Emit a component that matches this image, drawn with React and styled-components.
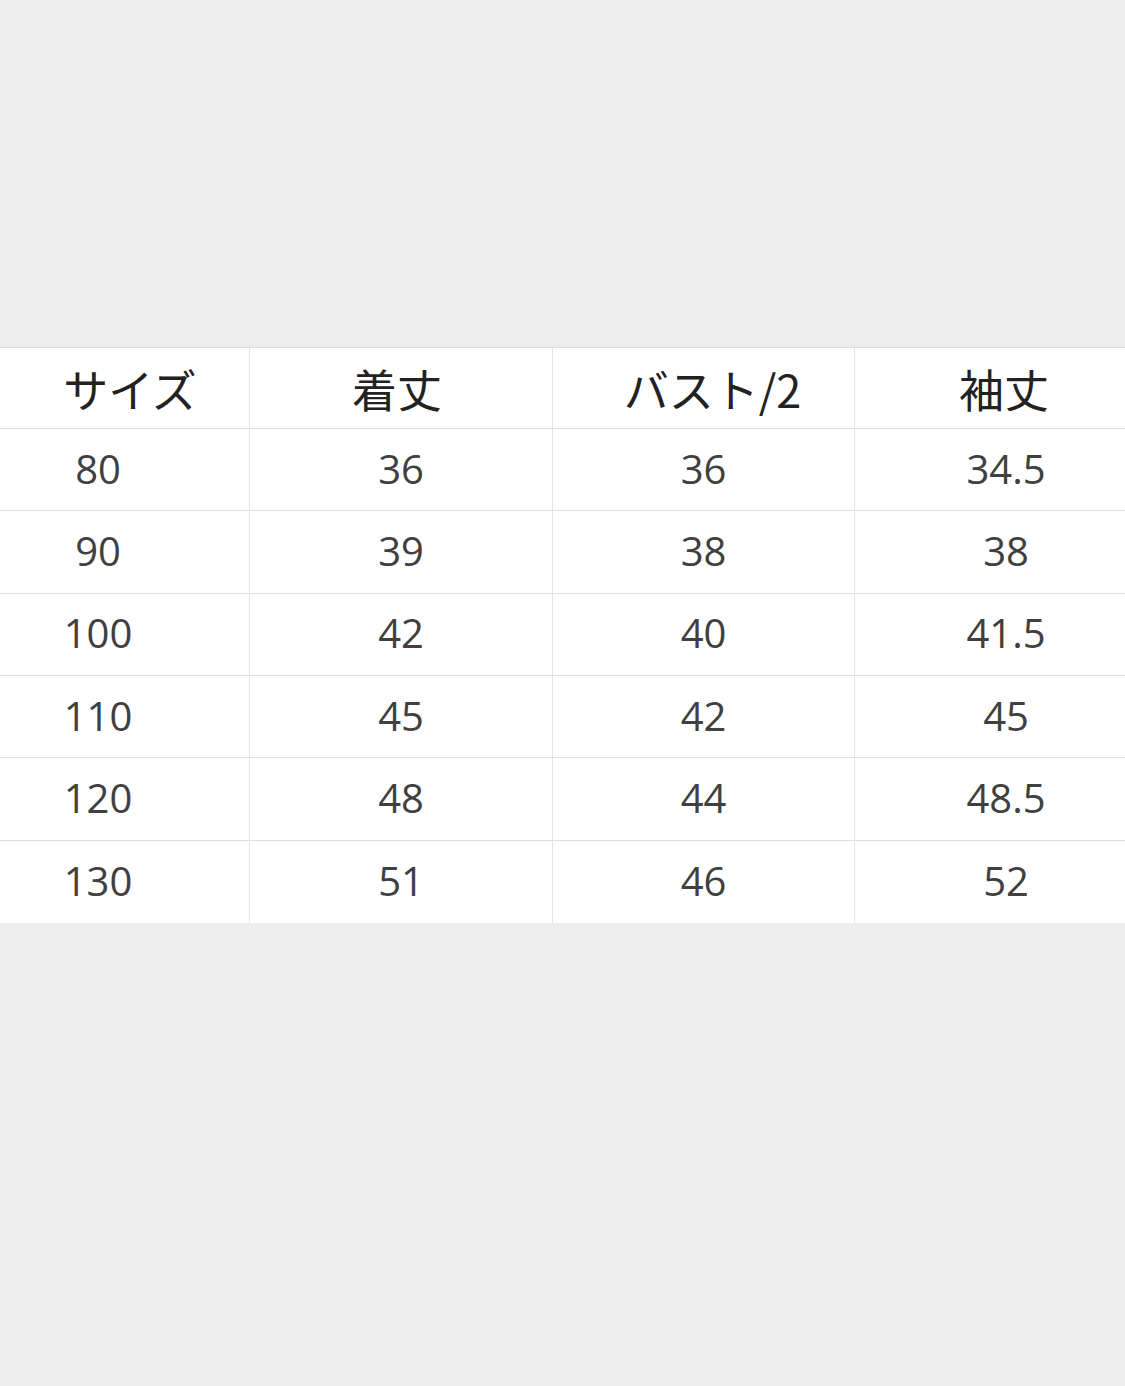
import React from 'react';
import styled, { createGlobalStyle } from 'styled-components';

const GlobalStyle = createGlobalStyle`
  html, body {
    margin: 0;
    padding: 0;
    background: #ededed;
  }
`

const Page = styled.div`
  width: 1125px;
  height: 1386px;
  overflow: hidden;
  padding-top: 347px;
  box-sizing: border-box;
  background: #ededed;
`

const Table = styled.div`
  display: grid;
  grid-template-columns: 303px 303px 302px 303px;
  margin-left: -53px;
  width: 1211px;
  background: #fff;
  border-top: 1px solid #dedede;
`

const Cell = styled.div`
  height: ${p => (p.$head ? '81px' : '82.34px')};
  box-sizing: border-box;
  display: flex;
  align-items: center;
  justify-content: center;
  border-bottom: ${p => (p.$last ? 'none' : '1px solid #dedede')};
  border-right: 1px solid #e4e4e4;
  font-family: ${p => (p.$head
    ? '"Noto Sans CJK JP", "Open Sans", sans-serif'
    : '"Open Sans", "Noto Sans CJK JP", sans-serif')};
  font-size: ${p => (p.$head ? '45px' : '40px')};
  font-weight: 400;
  color: ${p => (p.$head ? '#222' : '#404040')};
  padding-left: ${p => (p.$shift > 0 ? p.$shift : 0)}px;
  padding-right: ${p => (p.$shift < 0 ? -p.$shift : 0)}px;
  padding-bottom: ${p => (p.$head ? '0' : '3px')};
`

const headers = [
  { text: 'サイズ', shift: 64 },
  { text: '着丈', shift: -8 },
  { text: 'バスト/2', shift: 18 },
  { text: '袖丈', shift: -4 },
]

const rows = [
  ['80', '36', '36', '34.5'],
  ['90', '39', '38', '38'],
  ['100', '42', '40', '41.5'],
  ['110', '45', '42', '45'],
  ['120', '48', '44', '48.5'],
  ['130', '51', '46', '52'],
]

const App = () => {
  return (
    <>
      <GlobalStyle />
      <Page>
        <Table>
          {headers.map(h => (
            <Cell key={h.text} $head $shift={h.shift}>{h.text}</Cell>
          ))}
          {rows.map((r, ri) =>
            r.map((v, ci) => (
              <Cell key={ri + '-' + ci} $last={ri === rows.length - 1}>{v}</Cell>
            ))
          )}
        </Table>
      </Page>
    </>
  )
}

export default App
